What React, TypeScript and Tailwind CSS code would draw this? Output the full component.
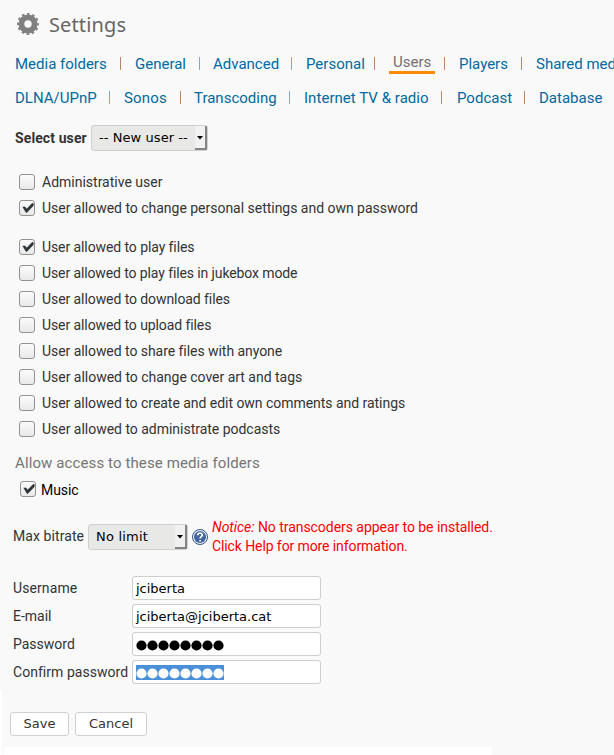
import React from "react";

type NavItem = { label: string; box: string; sep?: string; tone?: string; active?: boolean };

const warm = "bg-[#b8866a]";
const cool = "bg-[#7fa9c6]";

const primaryNav: NavItem[] = [
  { label: "Media folders", box: "w-[105px]", sep: "w-[15px]", tone: warm },
  { label: "General", box: "w-[64px]", sep: "w-[14px]", tone: cool },
  { label: "Advanced", box: "w-[78px]", sep: "w-[15px]", tone: cool },
  { label: "Personal", box: "w-[68px]", sep: "w-[15px]", tone: warm },
  { label: "Users", box: "w-[55px]", sep: "w-[15px]", tone: warm, active: true },
  { label: "Players", box: "w-[62px]", sep: "w-[15px]", tone: warm },
  { label: "Shared media", box: "w-[100px]" },
];

const secondaryNav: NavItem[] = [
  { label: "DLNA/UPnP", box: "w-[94px]", sep: "w-[15px]", tone: cool },
  { label: "Sonos", box: "w-[56px] tracking-[0.15px]", sep: "w-[14px]", tone: warm },
  { label: "Transcoding", box: "w-[95px]", sep: "w-[15px]", tone: cool },
  { label: "Internet TV & radio", box: "w-[137px] tracking-[0.04px]", sep: "w-[16px]", tone: warm },
  { label: "Podcast", box: "w-[67px]", sep: "w-[15px]", tone: warm },
  { label: "Database", box: "w-[70px]" },
];

function Nav({ items }: { items: NavItem[] }) {
  return (
    <nav className="flex h-[34px] items-center pl-[15px] text-[15px] whitespace-nowrap text-[#00699e]">
      {items.map((item) => (
        <React.Fragment key={item.label}>
          <span className={`${item.box} shrink-0`}>
            {item.active ? (
              <span className="-mt-px block h-[21px] w-[46px] border-b-[3px] border-[#ff8b00] pt-px pl-1 leading-[16px] text-[#707070]">{item.label}</span>
            ) : (
              item.label
            )}
          </span>
          {item.sep && (
            <span className={`${item.sep} flex shrink-0`}>
              <span className={`-mt-px h-[13px] w-px ${item.tone}`} />
            </span>
          )}
        </React.Fragment>
      ))}
    </nav>
  );
}

function CheckBox({ checked }: { checked?: boolean }) {
  return (
    <span className="flex h-4 w-4 shrink-0 items-center justify-center rounded-[3px] border border-[#92928e] bg-linear-to-b from-[#fbfbfb] to-[#e9e9e9]">
      {checked && (
        <svg width="14" height="14" viewBox="0 0 14 14" className="shrink-0">
          <path d="M2.8 5.9L5 5.9L6.7 8L12.2 2.3L13.3 2.6V4.8L6.9 11.4H6Z" fill="#2e3436" stroke="#2e3436" strokeWidth="0.5" />
        </svg>
      )}
    </span>
  );
}

function Option({ label, checked, tracking = "" }: { label: string; checked?: boolean; tracking?: string }) {
  return (
    <label className="flex h-[26px] items-center gap-[7px] pl-[19px]">
      <CheckBox checked={checked} />
      <span className={tracking}>{label}</span>
    </label>
  );
}

function Select({ label, box }: { label: string; box: string }) {
  return (
    <span className={`${box} flex h-[26px] shrink-0 justify-between rounded-[3px] border border-[#d0d0ce] bg-[#e8e8e7] pl-[7px] font-['DejaVu_Sans'] text-[13px] leading-[24px] text-black`}>
      <span className="whitespace-nowrap">{label}</span>
      <span className="flex w-3 items-center justify-center border-r-2 border-b-2 border-[#858585] bg-[#f1f1f1] pt-[2px]">
        <svg width="6" height="4" viewBox="0 0 6 4"><path d="M0 0H6L3 3.5Z" fill="#000" /></svg>
      </span>
    </span>
  );
}

const permissions = [
  { label: "User allowed to play files", checked: true, tracking: "tracking-[-0.09px]" },
  { label: "User allowed to play files in jukebox mode", tracking: "tracking-[-0.11px]" },
  { label: "User allowed to download files", tracking: "tracking-[-0.08px]" },
  { label: "User allowed to upload files", tracking: "tracking-[-0.09px]" },
  { label: "User allowed to share files with anyone", tracking: "tracking-[-0.05px]" },
  { label: "User allowed to change cover art and tags", tracking: "tracking-[-0.02px]" },
  { label: "User allowed to create and edit own comments and ratings", tracking: "tracking-[-0.035px]" },
  { label: "User allowed to administrate podcasts", tracking: "tracking-[-0.02px]" },
];

function Dots({ selected }: { selected?: boolean }) {
  return (
    <svg width="88" height="15" viewBox="0 0 88 15" className={selected ? "bg-[#4a90d9]" : ""}>
      {Array.from({ length: 8 }, (_, i) => (
        <circle key={i} cx={5.5 + i * 11} cy="8.5" r="5.1" fill={selected ? "#fff" : "#000"} />
      ))}
    </svg>
  );
}

function Field({ label, children, tracking = "" }: { label: string; children: React.ReactNode; tracking?: string }) {
  return (
    <div className="flex h-7 items-center pl-[13px]">
      <span className={`w-[119px] whitespace-nowrap ${tracking}`}>{label}</span>
      <span className="flex h-6 w-[189px] items-center rounded-[3px] border border-[#cfcfcf] bg-white pl-[3px] font-['DejaVu_Sans'] text-[13px] text-black">{children}</span>
    </div>
  );
}

export default function App() {
  return (
    <main className="flex h-[755px] w-[614px] flex-col overflow-hidden bg-[#f9f9f9] font-[Roboto,sans-serif] text-[14px] leading-[19px] text-[#333333]">
      <header className="flex h-[47px] shrink-0 items-center gap-[10px] pl-[17px]">
        <svg width="22" height="22" viewBox="-11 -11 22 22">
          <circle r="6.6" fill="none" stroke="#808080" strokeWidth="5.8" />
          <circle r="10.1" fill="none" stroke="#808080" strokeWidth="1.8" strokeDasharray="2.7 2.588" strokeDashoffset="1.35" />
        </svg>
        <h1 className="pt-[2px] font-['Noto_Sans'] text-[20px] leading-7 tracking-[0.13px] text-[#666666]">Settings</h1>
      </header>
      <Nav items={primaryNav} />
      <Nav items={secondaryNav} />

      <div className="mt-[10px] flex h-[26px] shrink-0 items-center gap-1 pl-[15px]">
        <span className="w-[72px] font-bold tracking-[0.1px] whitespace-nowrap">Select user</span>
        <Select label="-- New user --" box="w-[117px] tracking-[0.07px]" />
      </div>

      <section className="mt-[18px] shrink-0">
        <Option label="Administrative user" />
        <Option label="User allowed to change personal settings and own password" checked tracking="tracking-[-0.02px]" />
      </section>
      <section className="mt-[13px] shrink-0">
        {permissions.map((p) => <Option key={p.label} {...p} />)}
      </section>

      <h2 className="mt-[12px] shrink-0 pl-[15px] text-[15px] tracking-[0.11px] text-[#757575]">Allow access to these media folders</h2>
      <label className="mt-[3px] flex h-[26px] shrink-0 items-center gap-[5px] pl-5 text-black">
        <CheckBox checked />
        <span className="pt-[3px] tracking-[-0.08px]">Music</span>
      </label>

      <div className="mt-[15px] flex h-10 shrink-0 items-center pl-[13px]">
        <span className="w-[75px] pb-[2px] tracking-[0.08px] whitespace-nowrap">Max bitrate</span>
        <Select label="No limit" box="w-[100px] tracking-[0.2px]" />
        <svg className="mr-1 ml-1 shrink-0" width="16" height="16" viewBox="0 0 16 16">
          <circle cx="8" cy="8" r="7.5" fill="#f4f7fb" stroke="#315486" />
          <circle cx="8" cy="8" r="6" fill="#4165a2" />
          <path d="M5.7 6.2C5.8 3.5 10.4 3.5 10.3 6.1C10.2 7.6 8.1 7.7 8.1 9.5M8.1 11V12.5" fill="none" stroke="#fff" strokeWidth="1.7" />
        </svg>
        <p className="tracking-[-0.05px] whitespace-nowrap text-[#ff0000]"><em>Notice:</em> No transcoders appear to be installed.<br /><span className="tracking-[-0.1px]">Click Help for more information.</span></p>
      </div>

      <section className="mt-[17px] shrink-0">
        <Field label="Username" tracking="tracking-[0.1px]">jciberta</Field>
        <Field label="E-mail">jciberta@jciberta.cat</Field>
        <Field label="Password"><Dots /></Field>
        <Field label="Confirm password" tracking="tracking-[0.04px]"><Dots selected /></Field>
      </section>

      <footer className="mt-[4px] flex h-[65px] shrink-0">
        <div className="w-[2px] bg-white" />
        <div className="flex flex-1 flex-col">
          <div className="flex h-[57px] gap-[6px] pt-[22px] pl-2 font-['DejaVu_Sans'] text-[13px] leading-[22px]">
            <button className="h-6 w-[59px] rounded-[3px] border border-[#cfcfcf] bg-white">Save</button>
            <button className="h-6 w-[72px] rounded-[3px] border border-[#cfcfcf] bg-white">Cancel</button>
          </div>
          <div className="ml-[2px] h-2 w-[488px] bg-white" />
        </div>
      </footer>
    </main>
  );
}
